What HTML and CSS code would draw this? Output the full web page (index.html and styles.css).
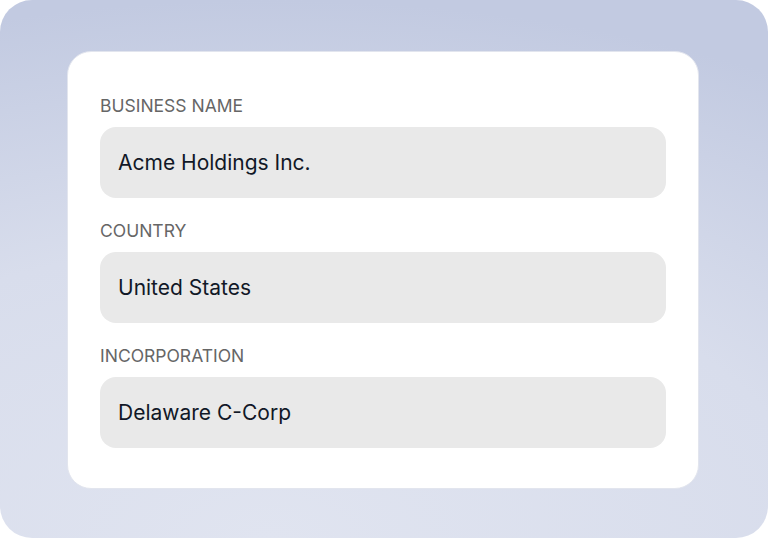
FILE: index.html
```html
<!DOCTYPE html>
<html lang="en">
<head>
    <meta charset="UTF-8">
    <meta name="viewport" content="width=device-width, initial-scale=1.0">
    <title>Business Details</title>
    <link rel="stylesheet" href="styles.css">
</head>
<body>

<div class="frame">
    <div class="card">
        <div class="field">
            <div class="label">BUSINESS NAME</div>
            <div class="value">Acme Holdings Inc.</div>
        </div>
        <div class="field">
            <div class="label">COUNTRY</div>
            <div class="value">United States</div>
        </div>
        <div class="field">
            <div class="label">INCORPORATION</div>
            <div class="value">Delaware C-Corp</div>
        </div>
    </div>
</div>

</body>
</html>
```

FILE: styles.css
```css
html, body {
    margin: 0;
    padding: 0;
    background-color: white;
}
body {
    font-family: Inter, "Noto Sans", sans-serif;
}
.frame {
    width: 768px;
    height: 538px;
    box-sizing: border-box;
    border-radius: 32px;
    padding-top: 51px;
    background: radial-gradient(ellipse 130% 100% at 35% 100%, #e0e4f0 0%, #d8ddec 55%, #c2cae1 100%);
}
.card {
    width: 632px;
    margin-left: 67px;
    box-sizing: border-box;
    padding: 43px 32px 40px;
    background-color: white;
    border: 1px solid #e2e5ee;
    border-radius: 24px;
}
.field {
    margin-bottom: 22px;
}
.field:last-child {
    margin-bottom: 0;
}
.label {
    font-size: 17.5px;
    line-height: 22px;
    color: #666;
    margin-bottom: 10px;
}
.value {
    height: 71px;
    display: flex;
    align-items: center;
    padding: 0 18px;
    background-color: #e9e9e9;
    border-radius: 16px;
    font-size: 21px;
    color: #111827;
}
```
